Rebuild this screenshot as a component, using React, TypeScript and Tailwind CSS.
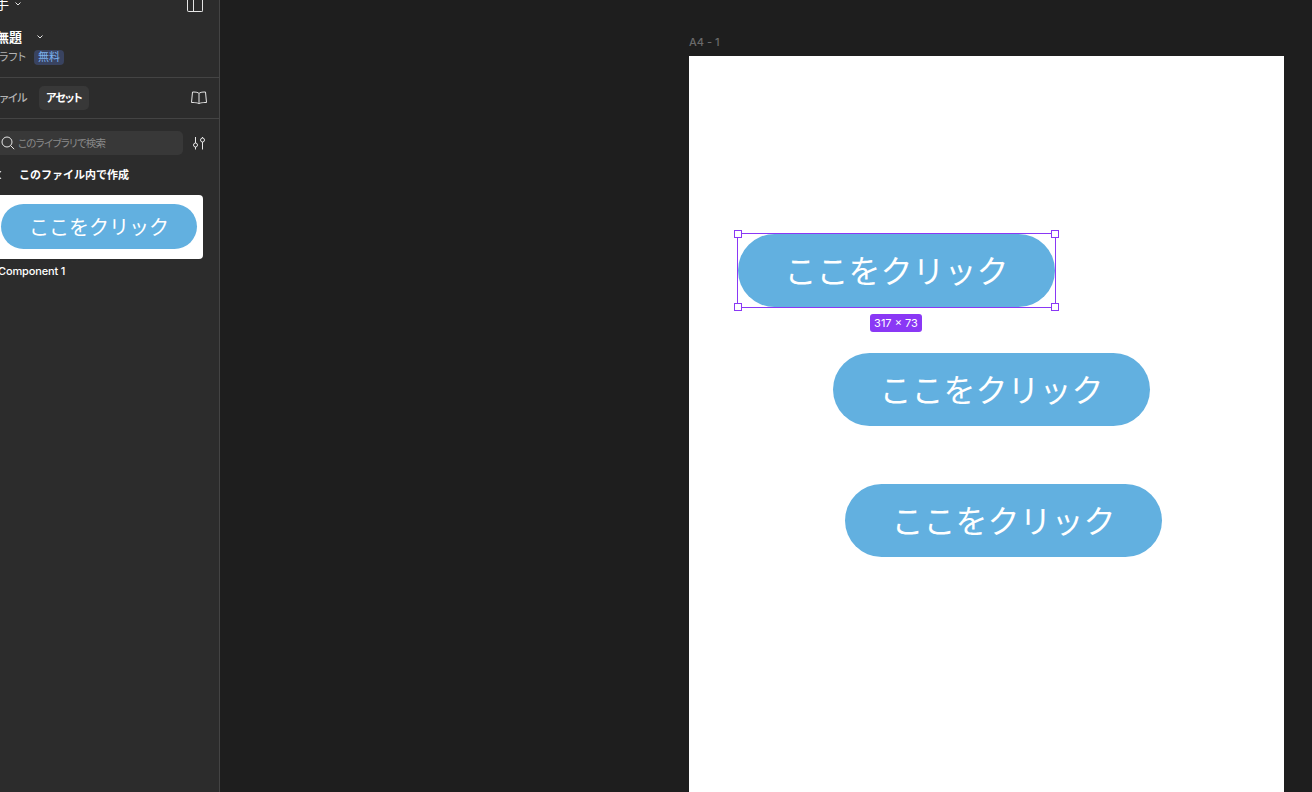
import { useState } from "react";

const jp = "font-['Inter','Noto_Sans_CJK_JP',sans-serif]";
const palt = "[font-feature-settings:'palt']";

const ClickButton = ({ className }: { className: string }) => {
  return (
    <div
      className={`absolute flex h-[73px] w-[317px] items-center justify-center rounded-[37px] bg-[#62b0e0] pt-[2px] text-[32px] font-normal text-white ${className}`}
    >
      ここをクリック
    </div>
  );
};

const Handle = ({ className }: { className: string }) => {
  return (
    <div
      className={`absolute h-[8px] w-[8px] border border-[#8a38f5] bg-white ${className}`}
    />
  );
};

const SearchIcon = () => (
  <svg width="14" height="14" viewBox="0 0 14 14" fill="none" stroke="#e6e6e6" strokeWidth="1">
    <circle cx="6" cy="6" r="5" />
    <path d="M9.6 9.6 13.2 13.2" />
  </svg>
);

const SlidersIcon = () => (
  <svg width="14" height="14" viewBox="0 0 14 14" fill="none" stroke="#e6e6e6" strokeWidth="1">
    <path d="M3.500 1v6M3.500 11v2.500M10.500 1v1M10.500 6v7.500" />
    <circle cx="3.500" cy="9" r="2" />
    <circle cx="10.500" cy="4" r="2" />
  </svg>
);

const BookIcon = () => (
  <svg width="16" height="14" viewBox="0 0 16 14" fill="none" stroke="#e6e6e6" strokeWidth="1">
    <path d="M8 2.500C7 1.400 5.500 1 1.500 1l-1 10.500c4.500 0 6.500.3 7.500 1.500 1-1.200 3-1.500 7.500-1.500L14.500 1c-4 0-5.500.4-6.500 1.500Zm0 0V13" />
  </svg>
);

const Chevron = () => (
  <svg width="6" height="4" viewBox="0 0 6 4" fill="none" stroke="#e6e6e6" strokeWidth="1">
    <path d="M.5 .5 3 3 5.500 .5" />
  </svg>
);

export default function App() {
  const [tab] = useState("assets");

  return (
    <div className={`flex h-[792px] w-[1312px] overflow-hidden bg-[#1e1e1e] ${jp}`}>
      <aside className="flex h-full w-[220px] shrink-0 flex-col overflow-hidden border-r border-[#444444] bg-[#2c2c2c] text-white">
        <div className="h-[78px] shrink-0 border-b border-[#444444]">
          <div className="flex h-[12px] items-end justify-between pr-[16px]">
            <div className="-ml-[5px] -mt-[4px] flex items-center gap-[6px]">
              <span className="text-[14px] leading-[16px]">手</span>
              <Chevron />
            </div>
            <div className="relative h-[12px] w-[16px] rounded-b-[2px] border border-t-0 border-[#e6e6e6]">
              <div className="absolute left-[5px] top-0 h-full w-px bg-[#e6e6e6]" />
            </div>
          </div>
          <div className="mt-[16px] flex h-[18px] items-center -ml-[4px]">
            <span className="text-[13px] font-bold leading-[18px]">無題</span>
            <span className="ml-[15px]"><Chevron /></span>
          </div>
          <div className="mt-[3px] flex items-center">
            <div className="flex w-[26px] shrink-0 justify-end whitespace-nowrap">
              <span className={`text-[11px] leading-[16px] text-[#b3b3b3] ${palt}`}>ドラフト</span>
            </div>
            <span className="ml-[8px] rounded-[4px] bg-[#394360] px-[4px] text-[11px] leading-[15px] text-[#7cb2f0]">
              無料
            </span>
          </div>
        </div>

        <div className="flex h-[41px] shrink-0 items-center border-b border-[#444444] pr-[12px]">
          <div className="flex w-[27px] shrink-0 justify-end whitespace-nowrap">
            <span className={`text-[11px] font-medium tracking-[-0.5px] text-[#b3b3b3] ${palt}`}>ファイル</span>
          </div>
          <span
            className={`ml-[12px] flex h-[24px] w-[50px] items-center justify-center rounded-[5px] pt-[1px] text-[11px] font-bold tracking-[-0.8px] ${palt} ${tab === "assets" ? "bg-[#383838]" : ""}`}
          >
            アセット
          </span>
          <span className="ml-auto flex"><BookIcon /></span>
        </div>

        <div className="mt-[12px] flex h-[24px] shrink-0 items-center">
          <div className="-ml-[8px] flex h-[24px] w-[191px] items-center rounded-[5px] bg-[#383838] pl-[9px]">
            <SearchIcon />
            <span className={`ml-[3px] whitespace-nowrap pt-[1px] text-[10.5px] tracking-[-0.8px] text-[#8a8a8a] ${palt}`}>このライブラリで検索</span>
          </div>
          <span className="ml-[9px] flex"><SlidersIcon /></span>
        </div>

        <div className="mt-[12px] flex h-[16px] shrink-0 items-center">
          <svg className="-ml-[3px] shrink-0" width="5" height="10" viewBox="0 0 5 10" fill="none" stroke="#e6e6e6" strokeWidth="1">
            <path d="M4 1 1 5l3 4" />
          </svg>
          <span className="ml-[17px] pt-[1px] text-[11px] font-bold">このファイル内で作成</span>
        </div>

        <div className="mt-[12px] flex h-[64px] w-[203px] shrink-0 items-start rounded-r-[4px] bg-white pl-[1px] pt-[9px]">
          <div className="flex h-[45px] w-[196px] items-center justify-center rounded-[23px] bg-[#62b0e0] pt-[2px] text-[20px] font-normal text-white">
            ここをクリック
          </div>
        </div>

        <div className="-ml-[2px] mt-[4px] text-[11px] font-medium leading-[16px] tracking-[-0.15px]">Component 1</div>
      </aside>

      <main className="relative flex-1 overflow-hidden">
        <div className="absolute left-[469px] top-[35px] text-[11px] font-medium leading-[14px] text-[#6a6a6a]">
          A4 - 1
        </div>
        <div className="absolute left-[469px] top-[56px] h-[736px] w-[595px] bg-white" />

        <ClickButton className="left-[518px] top-[234px]" />
        <ClickButton className="left-[613px] top-[353px]" />
        <ClickButton className="left-[625px] top-[484px]" />

        <div className="absolute left-[517px] top-[233px] h-[75px] w-[319px] border border-[#8a38f5]" />
        <Handle className="left-[514px] top-[230px]" />
        <Handle className="left-[831px] top-[230px]" />
        <Handle className="left-[514px] top-[303px]" />
        <Handle className="left-[831px] top-[303px]" />
        <div className="absolute left-[650px] top-[314px] flex h-[18px] w-[52px] items-center justify-center rounded-[3px] bg-[#8a38f5] text-[11px] font-normal text-white">
          317 × 73
        </div>
      </main>
    </div>
  );
}
